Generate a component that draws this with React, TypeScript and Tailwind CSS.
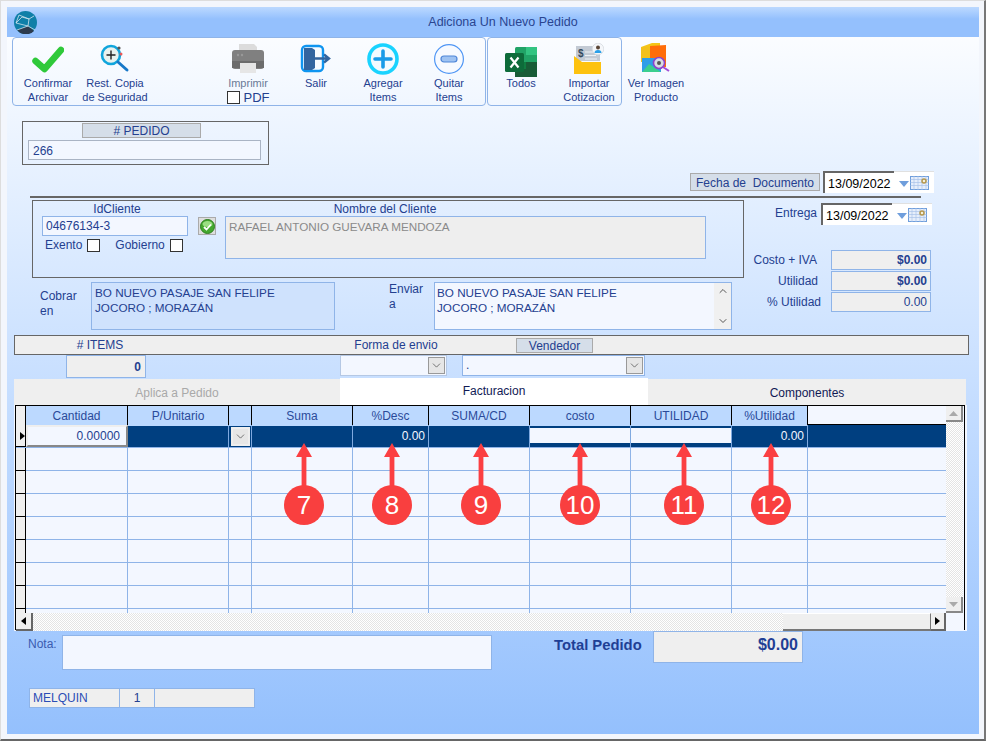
import { ChevronDown, ChevronUp } from 'lucide-react'
import type { ReactNode } from 'react'

const gridCols = 'grid grid-cols-[10px_102px_101px_23px_101px_76px_101px_101px_101px_76px_138px]'
const headers = ['Cantidad', 'P/Unitario', '', 'Suma', '%Desc', 'SUMA/CD', 'costo', 'UTILIDAD', '%Utilidad']

const markers = [
  { n: 7, left: 'left-[270px]' },
  { n: 8, left: 'left-[358px]' },
  { n: 9, left: 'left-[447px]' },
  { n: 10, left: 'left-[546px]' },
  { n: 11, left: 'left-[650px]' },
  { n: 12, left: 'left-[737px]' },
]

function Globe() {
  return (
    <svg width="23" height="23" viewBox="0 0 23 23" className="shrink-0">
      <circle cx="11.5" cy="11.5" r="11.5" fill="#0f7fa8" />
      <path d="M3 19a11.5 11.5 0 0 0 17 1L14 15z" fill="#2d3b4e" />
      <path d="M5 4l10 4 5-3M15 8l-1 7M5 4l-3 8 12 3 7 4M2 12l6-6 7 2M3 19l11-4" fill="none" stroke="#cfe3ee" strokeWidth=".8" />
    </svg>
  )
}

function CheckIcon() {
  return (
    <svg width="32" height="32" viewBox="0 0 32 32">
      <path d="M3.5 18l9 8L29 7" fill="none" stroke="#2fc93a" strokeWidth="6.5" strokeLinecap="round" strokeLinejoin="round" />
    </svg>
  )
}

function RestoreIcon() {
  return (
    <svg width="32" height="32" viewBox="0 0 32 32">
      <circle cx="12" cy="12" r="9" fill="#e8f2ee" stroke="#10a5dc" strokeWidth="2.6" />
      <path d="M12 7.5v9M7.5 12h9" stroke="#222" strokeWidth="1.4" />
      <path d="M19 19l9 8" stroke="#1778c8" strokeWidth="3" strokeLinecap="round" />
      <circle cx="20" cy="5" r="1.6" fill="#555" />
      <circle cx="22" cy="11" r="1.5" fill="#e85a5a" />
    </svg>
  )
}

function PrinterIcon() {
  return (
    <svg width="32" height="32" viewBox="0 0 32 32">
      <path d="M7 1h15l3 3v6H7z" fill="#dcdcdc" />
      <rect x="0" y="7" width="32" height="19" rx="3" fill="#808080" />
      <rect x="0" y="18" width="32" height="7" fill="#6c6c6c" />
      <rect x="8" y="20" width="16" height="10" fill="#e6e6e6" />
      <circle cx="6" cy="12" r="1.2" fill="#999" />
      <circle cx="10" cy="12" r="1.2" fill="#999" />
    </svg>
  )
}

function ExitIcon() {
  return (
    <svg width="32" height="32" viewBox="0 0 32 32">
      <rect x="2" y="3" width="21" height="25" rx="4" fill="#f8fbff" stroke="#0f95f0" strokeWidth="2.4" />
      <path d="M4 5h8l3 2v18l-3 2H4z" fill="#33659f" />
      <path d="M15 15.5h12M24 11.5l5 4-5 4" fill="none" stroke="#33659f" strokeWidth="2.4" />
    </svg>
  )
}

function PlusIcon() {
  return (
    <svg width="32" height="32" viewBox="0 0 32 32">
      <circle cx="16" cy="16" r="14" fill="#f4fbff" stroke="#19d3ff" strokeWidth="3.6" />
      <path d="M16 8v16M8 16h16" stroke="#1a9be8" strokeWidth="3.6" strokeLinecap="round" />
    </svg>
  )
}

function MinusIcon() {
  return (
    <svg width="32" height="32" viewBox="0 0 32 32">
      <circle cx="16" cy="16" r="14.4" fill="#f7faff" stroke="#4f96f5" strokeWidth="1.2" />
      <rect x="8" y="13" width="16" height="6" rx="3" fill="#9fc3f2" stroke="#4f86d8" strokeWidth="1.2" />
    </svg>
  )
}

function ExcelIcon() {
  return (
    <svg width="32" height="30" viewBox="0 0 32 30">
      <rect x="10" y="0" width="22" height="30" rx="1.5" fill="#21a366" />
      <rect x="21" y="0" width="11" height="8" fill="#33c481" />
      <rect x="10" y="15" width="22" height="7.5" fill="#107c41" />
      <rect x="21" y="15" width="11" height="7.5" fill="#185c37" />
      <rect x="10" y="22" width="22" height="8" fill="#185c37" />
      <rect x="0" y="6" width="19" height="19" rx="1.5" fill="#0d6b3a" />
      <path d="M5.5 10.5l8 10M13.5 10.5l-8 10" stroke="#fff" strokeWidth="2.2" />
    </svg>
  )
}

function ImportIcon() {
  return (
    <svg width="30" height="32" viewBox="0 0 30 32">
      <rect x="2" y="3" width="24" height="15" fill="#c3cad4" />
      <path d="M11 9h13M11 12.5h11M11 16h12" stroke="#eef2f6" strokeWidth="1" />
      <path d="M0 13l8 6h19v12H0z" fill="#fdc20f" />
      <circle cx="24" cy="6" r="5.8" fill="#f5f7fa" stroke="#d6dae0" strokeWidth=".8" />
      <circle cx="24" cy="4.5" r="2" fill="#5a4536" />
      <path d="M20.5 10a3.5 3 0 0 1 7 0z" fill="#2b9fe8" />
      <text x="4" y="13.5" fontSize="10" fontWeight="700" fill="#34495e" fontFamily="Liberation Sans">$</text>
    </svg>
  )
}

function ImageIcon() {
  return (
    <svg width="32" height="32" viewBox="0 0 32 32">
      <path d="M1 5l11-4h8v9H1z" fill="#f5c518" />
      <rect x="1" y="5" width="9" height="15" fill="#f3c11a" />
      <path d="M10 4l16-1v22H10z" fill="#ff6d0a" />
      <rect x="2" y="16" width="19" height="14" fill="#2e9ee8" />
      <path d="M2 30l7-8 6 4 6 4z" fill="#3bcf8e" />
      <circle cx="19" cy="21" r="5.5" fill="#d8dde4" stroke="#8e44c9" strokeWidth="1.6" />
      <circle cx="19" cy="21" r="2" fill="#555" />
      <path d="M23 25l6 4" stroke="#a24fd6" strokeWidth="2" />
    </svg>
  )
}

function Calendar() {
  return (
    <svg width="19" height="14" viewBox="0 0 19 14" className="shrink-0">
      <rect x=".5" y=".5" width="18" height="13" fill="#e6eefb" stroke="#6f9edc" />
      <path d="M.5 3.5h18M.5 6.5h18M.5 9.5h18M4 0v14M8 0v14M12 0v14M16 0v14" stroke="#a9c3ea" strokeWidth=".7" />
      <circle cx="14" cy="5" r="2" fill="#f3f0dd" stroke="#b5974c" strokeWidth="1.5" />
    </svg>
  )
}

function DatePicker() {
  return (
    <div className="flex h-[22px] w-[111px] bg-white">
      <div className="w-[71px] border-l-2 border-t-2 border-[#666] pl-[3px] pt-[2px] text-[12.5px] leading-[18px] text-black">13/09/2022</div>
      <div className="flex flex-1 items-center gap-[1px] border-t border-[#e0e0e0] pl-[5px]">
        <svg width="10" height="6" viewBox="0 0 10 6" className="mt-[3px] shrink-0"><path d="M0 0h10L5 6z" fill="#6f9edc" /></svg>
        <Calendar />
      </div>
    </div>
  )
}

function Check({ className = '' }: { className?: string }) {
  return <span className={`inline-block h-[13px] w-[13px] border border-[#333] bg-white ${className}`} />
}

function ComboButton({ className = '' }: { className?: string }) {
  return (
    <span className={`flex items-center justify-center border border-[#999] bg-[#e6e6e6] text-[#444] ${className}`}>
      <ChevronDown size={13} strokeWidth={1.3} />
    </span>
  )
}

function ToolButton({ icon, label, className = 'w-[66px]', iconClass = 'pt-[5px]' }: { icon: ReactNode; label: ReactNode; className?: string; iconClass?: string }) {
  return (
    <div className={`flex flex-col items-center text-center text-[11px] leading-[14px] text-[#24408f] ${className}`}>
      <div className={`h-[38px] shrink-0 ${iconClass}`}>{icon}</div>
      {label}
    </div>
  )
}

function Amount({ label, value, labelClass, bold }: { label: string; value: string; labelClass: string; bold?: boolean }) {
  return (
    <div className="flex h-[21px] items-start justify-end pr-[3px]">
      <span className={`text-[12px] leading-[20px] text-[#24408f] ${labelClass}`}>{label}</span>
      <div className={`h-[20px] w-[100px] border border-[#8fb4e8] bg-[#efefef] pr-[3px] text-right text-[12px] leading-[19px] text-[#24408f] ${bold ? 'font-bold' : ''}`}>{value}</div>
    </div>
  )
}

function Grid() {
  return (
    <div className="relative h-[226px] w-[953px] bg-[#f3f7ff] pl-[1px] text-[12px]">
      <div className="h-[225px] w-[950px] border-l border-r border-t border-black">
        <div className="flex">
          <div className="w-[930px]">
            <div className={`${gridCols} h-[19px] border-b border-black`}>
              <div className="border-r border-black bg-[#efefef]" />
              {headers.map((h, i) => (
                <div key={i} className="border-r border-black bg-[#bcd9ff] text-center leading-[20px] text-[#2a4a9a]">{h}</div>
              ))}
              <div />
            </div>
            <div className={`${gridCols} h-[23px] border-b border-[#8fb4e8] bg-[#003f80] text-right leading-[22px] text-[#f3f7ff]`}>
              <div className="flex items-center justify-end border-r border-b border-black bg-[#efefef]">
                <svg width="5" height="8" viewBox="0 0 5 8"><path d="M0 0l5 4-5 4z" fill="#000" /></svg>
              </div>
              <div className="border-b-2 border-l-2 border-r-2 border-t-2 border-b-[#888] border-l-[#eee] border-r-[#888] border-t-[#eee] bg-[#f3f7ff] pr-[6px] leading-[18px] text-[#24408f]">0.00000</div>
              <div className="border-r border-[#7fa9e0]" />
              <div className="flex items-center justify-center border-r border-[#7fa9e0]">
                <ComboButton className="h-[19px] w-[19px] border-2 border-[#eee]" />
              </div>
              <div className="border-r border-[#7fa9e0]" />
              <div className="border-r border-[#7fa9e0] pr-[3px]">0.00</div>
              <div className="border-r border-[#7fa9e0]" />
              <div className="border-r border-[#7fa9e0] pb-[4px] pt-[3px]"><div className="h-full bg-[#f3f7ff]" /></div>
              <div className="border-r border-[#7fa9e0] pb-[4px] pt-[3px]"><div className="h-full bg-[#f3f7ff]" /></div>
              <div className="border-r border-[#7fa9e0] pr-[3px]">0.00</div>
              <div />
            </div>
            {[0, 1, 2, 3, 4, 5, 6].map((r) => (
              <div key={r} className={`${gridCols} h-[23px] border-b border-[#8fb4e8]`}>
                <div className="-mb-[1px] border-b border-r border-black bg-[#efefef]" />
                {[0, 1, 2, 3, 4, 5, 6, 7, 8].map((c) => <div key={c} className="border-r border-[#8fb4e8]" />)}
                <div />
              </div>
            ))}
            <div className={`${gridCols} h-[4px]`}>
              <div className="border-r border-black bg-[#efefef]" />
              {[0, 1, 2, 3, 4, 5, 6, 7, 8].map((c) => <div key={c} className="border-r border-[#8fb4e8]" />)}
              <div />
            </div>
          </div>
          <div className="flex h-[207px] w-[17px] flex-col justify-between bg-[repeating-conic-gradient(#e4e4e4_0_25%,#ffffff_0_50%)] bg-[length:2px_2px]">
            <span className="flex h-[16px] items-center justify-center border-b-2 border-r-2 border-[#888] bg-[#efefef]">
              <svg width="9" height="5" viewBox="0 0 9 5"><path d="M0 5h9L4.5 0z" fill="#aaa" /></svg>
            </span>
            <span className="flex h-[16px] items-center justify-center border-b-2 border-r-2 border-[#888] bg-[#efefef]">
              <svg width="9" height="5" viewBox="0 0 9 5"><path d="M0 0h9L4.5 5z" fill="#aaa" /></svg>
            </span>
          </div>
        </div>
        <div className="flex h-[18px] w-[930px] bg-[repeating-conic-gradient(#e4e4e4_0_25%,#ffffff_0_50%)] bg-[length:2px_2px]">
          <span className="flex w-[17px] items-center justify-center border-b-2 border-r-2 border-[#666] bg-[#efefef]">
            <svg width="5" height="8" viewBox="0 0 5 8"><path d="M5 0L0 4l5 4z" fill="#000" /></svg>
          </span>
          <div className="ml-[750px] w-[148px] border-b-2 border-r border-t border-[#777] border-t-white bg-[#efefef]" />
          <span className="flex w-[15px] items-center justify-center border-b-2 border-r-2 border-[#666] bg-[#efefef]">
            <svg width="5" height="8" viewBox="0 0 5 8"><path d="M0 0l5 4-5 4z" fill="#000" /></svg>
          </span>
        </div>
      </div>
      {markers.map((m) => (
        <div key={m.n} className={`absolute top-[38px] flex w-[40px] flex-col items-center ${m.left}`}>
          <svg width="16" height="44" viewBox="0 0 16 44" className="-mb-[2px]">
            <path d="M8 0l8 14h-5.6v30H5.6V14H0z" fill="#fb3f42" />
          </svg>
          <div className="flex h-[40px] w-[40px] items-center justify-center rounded-full bg-[#f93f3f] text-[26px] leading-none text-white">{m.n}</div>
        </div>
      ))}
    </div>
  )
}

export default function App() {
  return (
    <div className="h-[741px] w-[986px] overflow-hidden border-b-2 border-l border-r-2 border-t border-b-[#666] border-l-[#ddd] border-r-[#777] border-t-[#ddd] bg-[#f3f6fc] pb-[5px] pl-[6px] pr-[5px] pt-[6px] font-['Liberation_Sans',Arial,sans-serif] text-[#24408f]">
      <div className="h-[727px] w-[972px] bg-gradient-to-b from-[#ffffff] to-[#94c0fd]">
        {/* title bar */}
        <div className="flex h-[30px] items-center bg-gradient-to-b from-[#bcd9ff] to-[#94c0fd] to-40% pl-[7px] pr-[10px]">
          <Globe />
          <div className="flex-1 text-center text-[12.5px] text-[#2a4590]">Adiciona Un Nuevo Pedido</div>
        </div>

        {/* toolbar */}
        <div className="ml-[5px] flex h-[69px]">
          <div className="flex w-[474px] rounded-[4px] border border-[#8fb4e8] pl-[2px]">
            <ToolButton icon={<CheckIcon />} label={<>Confirmar<br />Archivar</>} />
            <ToolButton icon={<RestoreIcon />} label={<>Rest. Copia<br /><span className="whitespace-nowrap">de Seguridad</span></>} className="ml-[1px] w-[66px]" />
            <div className="ml-[67px] flex w-[66px] flex-col items-center text-center text-[11px] leading-[14px] text-[#6a7a96]">
              <div className="h-[38px] pt-[5px]"><PrinterIcon /></div>
              Imprimir
              <div className="mt-[1px] flex items-center gap-[4px] text-[13px] leading-[13px] text-[#24408f]"><Check />PDF</div>
            </div>
            <ToolButton icon={<ExitIcon />} label="Salir" className="ml-[2px] w-[66px]" />
            <ToolButton icon={<PlusIcon />} label={<>Agregar<br />Items</>} className="ml-[1px] w-[66px]" />
            <ToolButton icon={<MinusIcon />} label={<>Quitar<br />Items</>} />
          </div>
          <div className="ml-[1px] flex w-[135px] rounded-[4px] border border-[#8fb4e8] pl-[3px]">
            <ToolButton icon={<ExcelIcon />} label="Todos" className="w-[60px]" iconClass="pt-[9px]" />
            <ToolButton icon={<ImportIcon />} label={<>Importar<br />Cotizacion</>} className="ml-[8px] w-[60px]" iconClass="pt-[5px]" />
          </div>
          <ToolButton icon={<ImageIcon />} label={<>Ver Imagen<br />Producto</>} className="w-[68px] pt-[1px]" iconClass="pt-[4px]" />
        </div>

        {/* pedido */}
        <div className="ml-[15px] mt-[15px] flex h-[44px] w-[247px] flex-col items-start border border-[#666] pl-[5px] pt-[1px]">
          <div className="ml-[54px] h-[15px] w-[119px] border border-[#aaa] bg-[#d5dee9] text-center text-[12px] leading-[15px]">
            # PEDIDO
          </div>
          <div className="mt-[2px] h-[20px] w-[233px] border border-[#aab4c4] bg-[#f3f7ff] pl-[4px] text-[12px] leading-[20px]">266</div>
        </div>

        {/* fecha */}
        <div className="ml-[683px] mt-[6px] flex h-[22px] items-center">
          <div className="h-[18px] w-[130px] whitespace-pre border border-[#aaa] bg-[#d5dee9] text-center text-[12px] leading-[18px]">Fecha de  Documento</div>
          <div className="ml-[3px]"><DatePicker /></div>
        </div>
        <div className="ml-[23px] mt-[3px] h-[2px] w-[891px] bg-[#666]" />

        {/* cliente + totales */}
        <div className="ml-[25px] mt-[2px] flex h-[130px]">
          <div className="w-[712px]">
            <div className="flex h-[78px] border border-[#666] pl-[9px] text-[12px]">
              <div className="w-[146px] shrink-0">
                <div className="h-[15px] pl-[4px] text-center leading-[17px]">IdCliente</div>
                <div className="h-[20px] border border-[#8fb4e8] bg-[#f3f7ff] pl-[3px] leading-[19px]">04676134-3</div>
                <div className="mt-[1px] flex h-[16px] items-center pl-[3px]">
                  Exento<Check className="ml-[5px]" />
                  <span className="ml-[15px]">Gobierno</span><Check className="ml-[5px]" />
                </div>
              </div>
              <div className="ml-[10px] mt-[16px] flex h-[18px] w-[18px] shrink-0 items-center justify-center border border-[#aaa] bg-[#dedede]">
                <svg width="15" height="15" viewBox="0 0 15 15">
                  <circle cx="7.5" cy="7.5" r="7" fill="#43a82f" stroke="#2d7f1f" />
                  <ellipse cx="7.5" cy="5" rx="5" ry="3" fill="#9ade82" />
                  <path d="M4 8l2.5 2.5L11 5.5" fill="none" stroke="#fff" strokeWidth="1.8" />
                </svg>
              </div>
              <div className="ml-[9px] w-[481px]">
                <div className="h-[15px] w-[320px] text-center leading-[17px]">Nombre del Cliente</div>
                <div className="h-[43px] border border-[#8fb4e8] bg-[#eeeeee] pl-[3px] pt-[2px] text-[11.7px] leading-[15px] text-[#8a8a8a]">RAFAEL ANTONIO GUEVARA MENDOZA</div>
              </div>
            </div>
            <div className="mt-[4px] flex h-[48px] text-[12px]">
              <div className="ml-[8px] w-[51px] pt-[7px] leading-[15px]">Cobrar<br />en</div>
              <div className="h-[48px] w-[244px] border border-[#8fb4e8] bg-[#cfe2fd] pl-[3px] pt-[2px] text-[11.7px] leading-[15px]">
                BO NUEVO PASAJE SAN FELIPE<br />JOCORO ; MORAZÁN
              </div>
              <div className="ml-[54px] w-[45px] leading-[15px]">Enviar<br />a</div>
              <div className="flex h-[48px] w-[298px] border border-[#8fb4e8] bg-[#f3f7ff] pl-[2px] pt-[2px] text-[11.7px] leading-[15px]">
                <div className="flex-1">BO NUEVO PASAJE SAN FELIPE<br />JOCORO ; MORAZÁN</div>
                <div className="-mt-[2px] flex w-[17px] flex-col items-center justify-between bg-[#f0f0f0] py-[2px] text-[#555]">
                  <ChevronUp size={12} strokeWidth={2} />
                  <ChevronDown size={12} strokeWidth={2} />
                </div>
              </div>
            </div>
          </div>
          <div className="w-[190px]">
            <div className="mt-[3px] flex h-[22px] items-start justify-end gap-[4px] pr-[2px] text-[12px] leading-[20px]">
              Entrega<DatePicker />
            </div>
            <div className="mt-[25px]">
              <Amount label="Costo + IVA" value="$0.00" labelClass="mr-[14px]" bold />
              <Amount label="Utilidad" value="$0.00" labelClass="mr-[13px]" bold />
              <Amount label="% Utilidad" value="0.00" labelClass="mr-[10px]" />
            </div>
          </div>
        </div>

        {/* items */}
        <div className="ml-[7px] mt-[5px] flex h-[20px] w-[955px] items-center border border-[#666] bg-[#efefef] text-[12px]">
          <div className="w-[170px] text-center"># ITEMS</div>
          <div className="ml-[168px] w-[86px] whitespace-nowrap text-center">Forma de envio</div>
          <div className="ml-[77px] h-[15px] w-[77px] border border-[#aaa] bg-[#d5dee9] text-center leading-[14px]">Vendedor</div>
        </div>
        <div className="ml-[7px] flex h-[23px] items-start text-[12px]">
          <div className="ml-[52px] h-[23px] w-[80px] border border-[#8fb4e8] bg-[#efefef] pr-[4px] text-right font-bold leading-[22px]">0</div>
          <div className="ml-[194px] flex h-[21px] w-[107px] justify-end border border-[#b5c8e4] bg-[#f3f7ff] pr-[1px] pt-[1px]">
            <ComboButton className="h-[17px] w-[17px]" />
          </div>
          <div className="ml-[15px] flex h-[21px] w-[183px] items-start justify-between border border-[#8fb4e8] bg-[#f3f7ff] pl-[3px] pr-[1px] pt-[1px] leading-[17px]">
            .
            <ComboButton className="h-[17px] w-[17px]" />
          </div>
        </div>

        {/* tabs */}
        <div className="ml-[7px] flex h-[27px] items-end text-[12px]">
          <div className="h-[26px] w-[326px] bg-[#efefef] text-center leading-[28px] text-[#a9a9a9]">Aplica a Pedido</div>
          <div className="h-[27px] w-[308px] bg-white text-center leading-[27px] text-[#111a55]">Facturacion</div>
          <div className="h-[26px] w-[318px] bg-[#efefef] text-center leading-[28px] text-[#111a55]">Componentes</div>
        </div>
        <div className="ml-[7px]"><Grid /></div>

        {/* nota + total */}
        <div className="flex h-[57px] items-start text-[12px]">
          <div className="ml-[21px] mt-[4px] w-[34px] text-[#3a5bb0]">Nota:</div>
          <div className="mt-[4px] h-[35px] w-[430px] border border-[#8fb4e8] bg-[#f3f7ff]" />
          <div className="ml-[62px] w-[99px] whitespace-nowrap pt-[3px] text-[14.8px] font-bold text-[#1f3f95]">Total Pedido</div>
          <div className="h-[32px] w-[150px] border border-[#8fb4e8] bg-[#efefef] pr-[4px] pt-[1px] text-right text-[16px] font-bold text-[#1f3f95]">$0.00</div>
        </div>

        {/* status */}
        <div className="ml-[22px] flex h-[20px] w-[226px] text-[12px] leading-[18px]">
          <div className="w-[91px] border border-[#8fb4e8] bg-[#efefef] pl-[3px] text-[#2a4db5]">MELQUIN</div>
          <div className="w-[35px] border-y border-r border-[#8fb4e8] bg-[#efefef] text-center">1</div>
          <div className="w-[100px] border-y border-r border-[#8fb4e8] bg-[#efefef]" />
        </div>
      </div>
    </div>
  )
}
